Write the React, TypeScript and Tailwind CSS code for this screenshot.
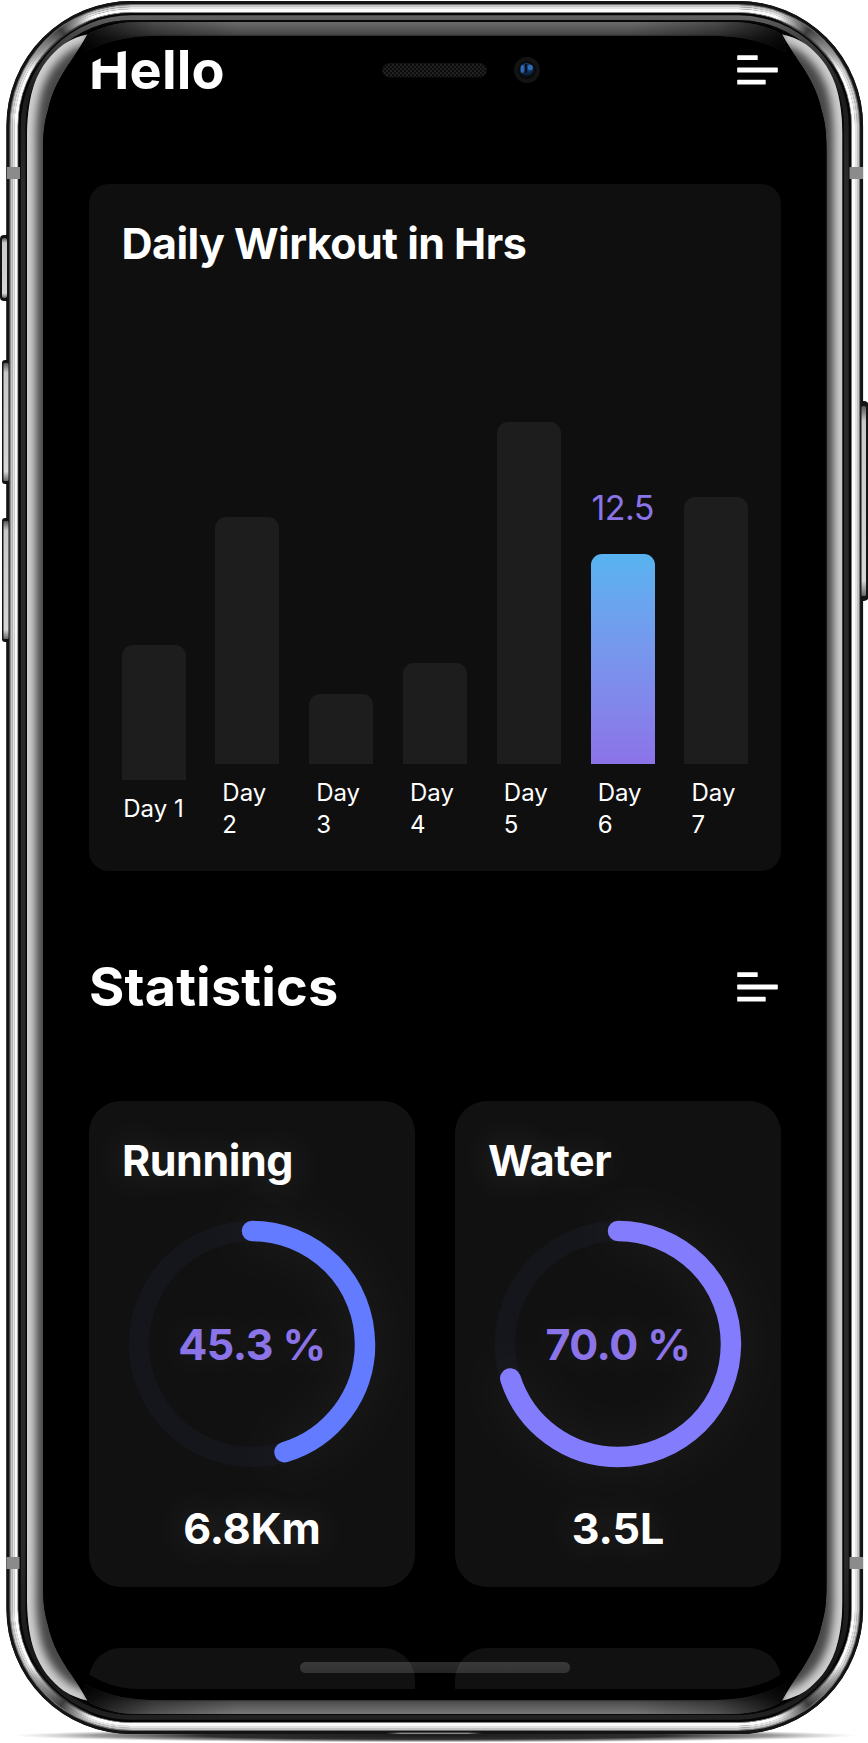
type Bar = { day: string; top: number; value?: string; single?: boolean };

const bars: Bar[] = [
  { day: "1", top: 135, single: true },
  { day: "2", top: 247 },
  { day: "3", top: 70 },
  { day: "4", top: 101 },
  { day: "5", top: 342 },
  { day: "6", top: 210, value: "12.5" },
  { day: "7", top: 267 },
];

const stats = [
  { title: "Running", percent: 45.3, total: "6.8Km", color: "#637bfe" },
  { title: "Water", percent: 70, total: "3.5L", color: "#837dfd" },
];

/* Rings of the metal body, from the outer edge inwards: [inset, width, paint]. */
const rings: [number, number, string][] = [
  [0, 3, "#131514"],
  [3, 1, "#6f6f6f"],
  [4, 2, "#c4c4c4"],
  [6, 2, "#e2e2e2"],
  [8, 3.2, "#fbfbfb"],
  [11.2, 0.8, "#8d8d8d"],
  [12, 2.4, "#050505"],
  [14.4, 4.8, "url(#bezel)"],
  [19.2, 1.4, "#080808"],
];

function MenuIcon() {
  return (
    <svg width="41" height="30" viewBox="0 0 41 30" fill="#fff" aria-hidden="true">
      <rect x="0.2" y="0.3" width="20.5" height="4.8" rx="0.6" />
      <rect x="0.2" y="12.6" width="40.6" height="4.8" rx="0.6" />
      <rect x="0.2" y="24.8" width="28.5" height="4.8" rx="0.6" />
    </svg>
  );
}

const sideGlare =
  "M27 133 C27.5 112 30 97 34 85 C41 65 52 53 64 44 C72 39 80 36 87.5 34.3 C82 44 77 52 71 61 C61 75 52 91 48 110 C44.5 122 43 132 43 152 L43 1583 C43 1603 44.5 1613 48 1625 C52 1644 61 1660 71 1674 C77 1683 82 1691 87.5 1700.7 C80 1699 72 1696 64 1691 C52 1682 41 1670 34 1650 C30 1638 27.5 1623 27 1602 Z";

const sideGlareEdge =
  "M27 133 C27.5 112 30 97 34 85 C41 65 52 53 64 44 C72 39 80 36 87.5 34.3 M27 133 L27 1602 C27.5 1623 30 1638 34 1650 C41 1670 52 1682 64 1691 C72 1696 80 1699 87.5 1700.7";

const band =
  "M84 52 C84 44 86 37 90 33 C106 25 122 22 140 22 L729.5 22 C748 22 764 25 779.5 33 C783.5 37 785.5 44 785.5 52 C762 40 738 35.7 710 35.7 L160 35.7 C131 35.7 107 40 84 52 Z";

function DeviceBody() {
  return (
    <svg className="absolute inset-0" width="868" height="1743" viewBox="0 0 868 1743" aria-hidden="true">
      <defs>
        <linearGradient id="bezel" gradientUnits="userSpaceOnUse" x1="0" y1="15" x2="0" y2="1720">
          <stop offset="0" stopColor="#636363" />
          <stop offset="0.01" stopColor="#484848" />
          <stop offset="0.045" stopColor="#1c1c1c" />
          <stop offset="0.1" stopColor="#2b2b2b" />
          <stop offset="0.9" stopColor="#2b2b2b" />
          <stop offset="0.97" stopColor="#161616" />
          <stop offset="1" stopColor="#222" />
        </linearGradient>
        <clipPath id="glareClip">
          <path d={sideGlare} />
        </clipPath>
        <filter id="soft" filterUnits="userSpaceOnUse" x="0" y="0" width="140" height="1743">
          <feGaussianBlur stdDeviation="4" />
        </filter>
        <linearGradient id="topBand" gradientUnits="userSpaceOnUse" x1="0" y1="22" x2="0" y2="36">
          <stop offset="0" stopColor="#6c6c6c" />
          <stop offset="1" stopColor="#414141" />
        </linearGradient>
        <linearGradient id="bottomBand" gradientUnits="userSpaceOnUse" x1="0" y1="21" x2="0" y2="36">
          <stop offset="0" stopColor="#7b7b7b" />
          <stop offset="1" stopColor="#484848" />
        </linearGradient>
        <linearGradient id="bandEnds" gradientUnits="userSpaceOnUse" x1="83" y1="0" x2="786.5" y2="0">
          <stop offset="0" stopColor="#000" stopOpacity="0.88" />
          <stop offset="0.04" stopColor="#000" stopOpacity="0.62" />
          <stop offset="0.1" stopColor="#000" stopOpacity="0.3" />
          <stop offset="0.22" stopColor="#000" stopOpacity="0" />
          <stop offset="0.78" stopColor="#000" stopOpacity="0" />
          <stop offset="0.9" stopColor="#000" stopOpacity="0.3" />
          <stop offset="0.96" stopColor="#000" stopOpacity="0.62" />
          <stop offset="1" stopColor="#000" stopOpacity="0.88" />
        </linearGradient>
        <linearGradient id="bandLow" gradientUnits="userSpaceOnUse" x1="0" y1="34" x2="0" y2="52">
          <stop offset="0" stopColor="#000" stopOpacity="0" />
          <stop offset="1" stopColor="#000" stopOpacity="0.9" />
        </linearGradient>
        <linearGradient id="cornerShade" gradientUnits="userSpaceOnUse" x1="27" y1="67" x2="91" y2="14">
          <stop offset="0" stopColor="#555" stopOpacity="0" />
          <stop offset="0.25" stopColor="#666" stopOpacity="0.6" />
          <stop offset="0.6" stopColor="#333" stopOpacity="0.95" />
          <stop offset="0.8" stopColor="#666" stopOpacity="0.6" />
          <stop offset="1" stopColor="#888" stopOpacity="0" />
        </linearGradient>
        <linearGradient id="button" x1="0" y1="0" x2="0" y2="1">
          <stop offset="0" stopColor="#555" />
          <stop offset="0.08" stopColor="#c9c9c9" />
          <stop offset="0.92" stopColor="#d6d6d6" />
          <stop offset="1" stopColor="#666" />
        </linearGradient>
        <radialGradient id="floor">
          <stop offset="0" stopColor="#1b1b1b" />
          <stop offset="0.55" stopColor="#242424" stopOpacity="0.95" />
          <stop offset="0.8" stopColor="#555" stopOpacity="0.6" />
          <stop offset="1" stopColor="#999" stopOpacity="0" />
        </radialGradient>
        <linearGradient id="lip" x1="0" y1="0" x2="1" y2="0">
          <stop offset="0" stopColor="#777" stopOpacity="0" />
          <stop offset="0.15" stopColor="#888" />
          <stop offset="0.85" stopColor="#888" />
          <stop offset="1" stopColor="#777" stopOpacity="0" />
        </linearGradient>
        <g id="leftGlare" clipPath="url(#glareClip)">
          <path d={sideGlare} fill="#474747" />
          <path d={sideGlareEdge} fill="none" stroke="#cfcfcf" strokeWidth="18" filter="url(#soft)" />
        </g>
        <g id="corner">
          <path d="M15 126 A117 117 0 0 1 132 9" fill="none" stroke="url(#cornerShade)" strokeWidth="9" />
        </g>
      </defs>

      <ellipse cx="435" cy="1735.5" rx="422" ry="7" fill="url(#floor)" />

      <g fill="#141414">
        <rect x="0" y="235" width="12" height="66" rx="4" />
        <rect x="2" y="360" width="12" height="124" rx="3" />
        <rect x="2" y="518" width="12" height="124" rx="3" />
        <rect x="856" y="401" width="13" height="200" rx="5" />
      </g>
      <rect x="6.5" y="1" width="856.5" height="1733" rx="125" fill="#000" />
      {rings.map(([inset, width, paint]) => (
        <rect
          key={inset}
          x={6.5 + inset + width / 2}
          y={1 + inset + width / 2}
          width={856.5 - 2 * inset - width}
          height={1733 - 2 * inset - width}
          rx={125 - inset - width / 2}
          fill="none"
          stroke={paint}
          strokeWidth={width + 0.2}
        />
      ))}
      <g fill="url(#button)">
        <rect x="2" y="238" width="5" height="60" rx="2" />
        <rect x="3.5" y="363" width="5" height="118" rx="1" />
        <rect x="3.5" y="521" width="5" height="118" rx="1" />
        <rect x="861.5" y="406" width="4.5" height="190" rx="1.5" />
      </g>

      <use href="#corner" />
      <use href="#corner" transform="translate(869.5 0) scale(-1 1)" />
      <use href="#corner" transform="translate(0 1735) scale(1 -1)" />
      <use href="#corner" transform="translate(869.5 1735) scale(-1 -1)" />

      <g fill="#8b8b8b">
        <rect x="7" y="167" width="13" height="12" />
        <rect x="6.5" y="1557" width="13" height="12" />
        <rect x="849.5" y="167" width="13.5" height="12" />
        <rect x="849.5" y="1557" width="13.5" height="12" />
      </g>

      <path d={band} fill="url(#topBand)" />
      <path d={band} fill="url(#bandEnds)" />
      <path d={band} fill="url(#bandLow)" />
      <g transform="translate(0 1736) scale(1 -1)">
        <path d={band} fill="url(#bottomBand)" />
        <path d={band} fill="url(#bandEnds)" />
        <path d={band} fill="url(#bandLow)" />
      </g>

      <use href="#leftGlare" />
      <use href="#leftGlare" transform="translate(869.5 0) scale(-1 1)" />
      <rect x="386" y="1732.6" width="96" height="1.4" fill="url(#lip)" />
    </svg>
  );
}

function Sensors() {
  return (
    <svg className="absolute left-[380px] top-[54px]" width="164" height="32" viewBox="380 54 164 32" aria-hidden="true">
      <defs>
        <pattern id="mesh" width="4" height="4" patternUnits="userSpaceOnUse">
          <rect width="4" height="4" fill="#0b0b0b" />
          <rect width="2" height="2" fill="#222" />
          <rect x="2" y="2" width="2" height="2" fill="#222" />
        </pattern>
        <radialGradient id="lens" cx="0.5" cy="0.3" r="0.7">
          <stop offset="0" stopColor="#1c4f8c" />
          <stop offset="0.5" stopColor="#123563" />
          <stop offset="1" stopColor="#060b14" />
        </radialGradient>
        <filter id="lensSoft">
          <feGaussianBlur stdDeviation="0.7" />
        </filter>
      </defs>
      <rect x="382.5" y="63.5" width="104" height="13.5" rx="6.7" fill="url(#mesh)" stroke="#131313" />
      <circle cx="527" cy="70" r="13" fill="#131313" />
      <circle cx="527" cy="70" r="9" fill="#0a0a0b" />
      <circle cx="526.7" cy="70" r="7" fill="url(#lens)" />
      <g filter="url(#lensSoft)">
        <ellipse cx="522.3" cy="69" rx="1.7" ry="4" fill="#2b6db4" />
        <ellipse cx="530.3" cy="67.5" rx="2.6" ry="2.8" fill="#2b6db4" />
        <rect x="525" y="64" width="2.2" height="9" fill="#07101f" />
      </g>
    </svg>
  );
}

function ChartBar({ bar }: { bar: Bar }) {
  return (
    <div className="flex w-16 flex-col items-center">
      {bar.value && (
        <span className="mb-[26px] text-[34px] leading-[40px] tracking-[-0.6px] text-[#8b74e8]">{bar.value}</span>
      )}
      <div
        className={
          bar.value
            ? "w-full rounded-t-[11px] bg-linear-to-b from-[#57b3f0] to-[#8b73e8]"
            : "w-full rounded-t-[11px] bg-[#1d1d1d]"
        }
        style={{ height: bar.top }}
      />
      {bar.single ? (
        <span className="mt-[13px] mb-[14px] text-2xl leading-8 whitespace-nowrap">Day {bar.day}</span>
      ) : (
        <span className="mt-[13px] -mb-0.5 w-[50px] self-center text-2xl leading-8">
          Day
          <br />
          {bar.day}
        </span>
      )}
    </div>
  );
}

function ProgressRing({ percent, color }: { percent: number; color: string }) {
  const r = 113;
  const length = 2 * Math.PI * r;
  return (
    <div className="relative mt-[35px] flex size-[248px] items-center justify-center">
      <svg className="absolute inset-0 overflow-visible" width="248" height="248" viewBox="0 0 248 248" aria-hidden="true">
        <circle cx="124" cy="124" r={r} fill="none" stroke="#15161b" strokeWidth="20.5" />
        <circle
          className="drop-shadow-[0_0_22px_rgba(255,255,255,0.06)]"
          cx="124"
          cy="124"
          r={r}
          fill="none"
          stroke={color}
          strokeWidth="20.5"
          strokeLinecap="round"
          strokeDasharray={`${(length * percent) / 100} ${length}`}
          transform="rotate(-90 124 124)"
        />
      </svg>
      <span className="relative text-[43px] leading-[50px] font-bold tracking-[-0.5px] text-[#8b74e8] [text-shadow:0_0_40px_rgba(255,255,255,0.12)]">
        {percent.toFixed(1)} %
      </span>
    </div>
  );
}

export default function App() {
  return (
    <div className="relative h-[1743px] w-[868px] overflow-hidden bg-white pt-[50px] pl-[43px] font-[Inter,'Liberation_Sans',sans-serif] text-white">
      <DeviceBody />
      <main className="relative h-[1639px] w-[784px] overflow-hidden rounded-[95px/102px] pr-[46px] pl-[46px]">
        <header className="-mt-[7px] flex h-[54px] items-center justify-between pr-[3.5px]">
          <h1 className="text-[54px] leading-[54px] font-bold tracking-[0.2px]">Hello</h1>
          <MenuIcon />
        </header>

        <section className="mt-[87px] flex h-[687px] flex-col justify-between rounded-[20px] bg-[#0f0f0f] px-[32.5px] pt-[34px] pb-8">
          <h2 className="text-[43px] leading-[50px] font-bold tracking-[-0.55px]">Daily Wirkout in Hrs</h2>
          <div className="flex items-end justify-between">
            {bars.map((bar) => (
              <ChartBar key={bar.day} bar={bar} />
            ))}
          </div>
        </section>

        <header className="mt-[89px] flex h-[54px] items-center justify-between pr-[3.5px]">
          <h2 className="text-[54px] leading-[54px] font-bold tracking-[0.15px]">Statistics</h2>
          <MenuIcon />
        </header>

        <div className="mt-[87px] grid grid-cols-2 gap-x-10 gap-y-[61px]">
          {stats.map((stat) => (
            <section key={stat.title} className="flex h-[486px] flex-col items-center rounded-[32px] bg-[#111] pt-[34px]">
              <h3 className="self-start pl-[33px] text-[43px] leading-[50px] font-bold tracking-[-0.45px] [text-shadow:0_0_40px_rgba(255,255,255,0.18)]">
                {stat.title}
              </h3>
              <ProgressRing percent={stat.percent} color={stat.color} />
              <p className="mt-[35px] text-[43px] leading-[50px] font-bold tracking-[-0.1px] [text-shadow:0_0_40px_rgba(255,255,255,0.18)]">{stat.total}</p>
            </section>
          ))}
          <div className="h-[486px] rounded-[32px] bg-[#111]" />
          <div className="h-[486px] rounded-[32px] bg-[#111]" />
        </div>
      </main>
      <Sensors />
      <div className="absolute top-[1662px] left-[300px] h-[11px] w-[270px] rounded-full bg-linear-to-b from-white/17 to-white/14" />
    </div>
  );
}
